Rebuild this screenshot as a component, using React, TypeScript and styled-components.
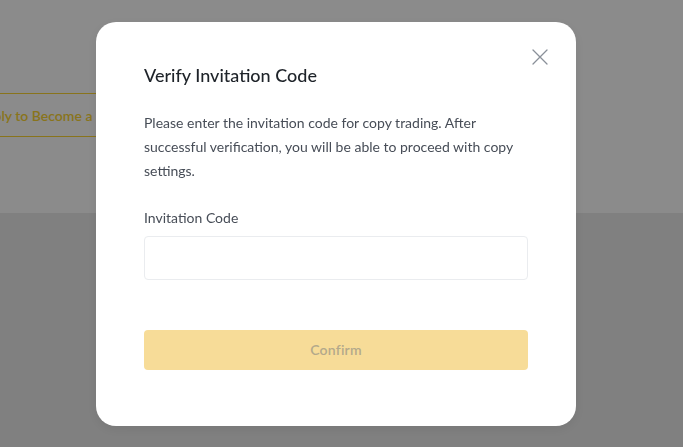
import React from "react";
import styled, { createGlobalStyle } from "styled-components";

const Global = createGlobalStyle`
  html, body { margin: 0; padding: 0; }
  body {
    width: 683px;
    height: 447px;
    overflow: hidden;
    font-family: Lato, "Noto Sans", Roboto, sans-serif;
    background: #ebebeb;
  }
  * { box-sizing: border-box; }
`;

const Page = styled.div`
  display: flex;
  flex-direction: column;
  height: 447px;
`;

const Hero = styled.section`
  height: 213px;
  background: #ffffff;
  display: flex;
  align-items: flex-start;
  padding-top: 93px;
`;

const Lower = styled.section`
  flex: 1;
  background: #ebebeb;
`;

const OutlineButton = styled.button`
  margin-left: -49px;
  height: 44px;
  padding: 0 24px;
  border: 1px solid #fcd535;
  border-radius: 4px;
  background: transparent;
  color: #fcd535;
  font-family: inherit;
  font-size: 14px;
  font-weight: 600;
  white-space: nowrap;
`;

const Mask = styled.div`
  position: fixed;
  inset: 0;
  background: rgba(0, 0, 0, 0.455);
  display: flex;
  align-items: center;
  justify-content: center;
  padding-right: 11px;
`;

const Dialog = styled.div`
  position: relative;
  width: 480px;
  background: #ffffff;
  border-radius: 20px;
  padding: 40px 48px 56px;
  display: flex;
  flex-direction: column;
  box-shadow: 0 3px 12px rgba(0, 0, 0, 0.08);
`;

const CloseButton = styled.button`
  position: absolute;
  top: 27px;
  right: 28px;
  width: 16px;
  height: 16px;
  padding: 0;
  border: none;
  background: none;
  display: flex;
  align-items: center;
  justify-content: center;
  cursor: pointer;
`;

const Title = styled.h2`
  margin: 0 0 23px;
  font-size: 18px;
  line-height: 26px;
  font-weight: 500;
  color: #1e2329;
`;

const Description = styled.p`
  margin: 0 0 25px;
  font-size: 14px;
  line-height: 24px;
  color: #474d57;
`;

const Label = styled.label`
  font-size: 14px;
  line-height: 20px;
  color: #474d57;
  margin-bottom: 8px;
`;

const Input = styled.input`
  height: 44px;
  width: 100%;
  border: 1px solid #eaecef;
  border-radius: 4px;
  outline: none;
  padding: 0 12px;
  font-family: inherit;
  font-size: 14px;
  color: #1e2329;
  margin-bottom: 50px;
`;

const Confirm = styled.button`
  height: 40px;
  width: 100%;
  border: none;
  border-radius: 4px;
  background: #f7dc98;
  color: #b3a98b;
  font-family: inherit;
  font-size: 14px;
  font-weight: 600;
  letter-spacing: 0.2px;
`;

export default function App() {
  return (
    <>
      <Global />
      <Page>
        <Hero>
          <OutlineButton>Apply to Become a Lead Trader</OutlineButton>
        </Hero>
        <Lower />
      </Page>
      <Mask>
        <Dialog role="dialog" aria-labelledby="verify-title">
          <CloseButton aria-label="Close">
            <svg width="16" height="16" viewBox="0 0 16 16" fill="none">
              <path d="M1 1L15 15M15 1L1 15" stroke="#8a9099" strokeWidth="1.3" strokeLinecap="round" />
            </svg>
          </CloseButton>
          <Title id="verify-title">Verify Invitation Code</Title>
          <Description>
            Please enter the invitation code for copy trading. After successful verification, you will be able to proceed with copy settings.
          </Description>
          <Label htmlFor="invite-code">Invitation Code</Label>
          <Input id="invite-code" />
          <Confirm disabled>Confirm</Confirm>
        </Dialog>
      </Mask>
    </>
  );
}
